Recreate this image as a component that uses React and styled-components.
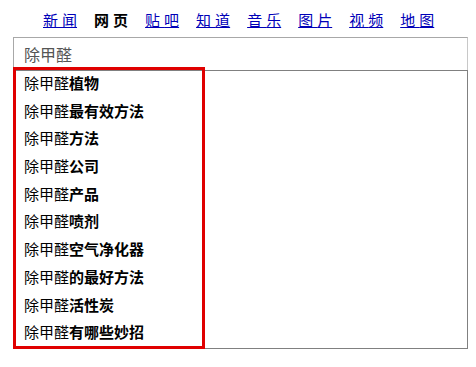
import React from "react";
import styled, { createGlobalStyle } from "styled-components";

const GlobalStyle = createGlobalStyle`
  html, body {
    margin: 0;
    padding: 0;
    background: #fff;
  }
  body {
    font-family: "Noto Sans CJK SC", "Liberation Sans", sans-serif;
  }
`;

const Page = styled.div`
  width: 476px;
  height: 367px;
  position: relative;
  box-sizing: border-box;
  padding: 10px 8px 0 13px;
`;

const Nav = styled.div`
  display: flex;
  gap: 17px;
  padding-left: 30px;
  height: 27px;
  font-size: 15px;
  line-height: 19px;
`;

const NavItem = styled.a`
  color: ${({ active }) => (active ? "#000" : "#0000b8")};
  font-weight: ${({ active }) => (active ? 700 : 400)};
  text-decoration: ${({ active }) => (active ? "none" : "underline")};
  cursor: pointer;
  span {
    letter-spacing: 4px;
  }
`;

const SearchBox = styled.div`
  width: 455px;
  box-sizing: border-box;
  height: 33px;
  border: 1px solid #a8a8a8;
  border-bottom: none;
  border-right-color: #c8c8c8;
  padding: 6px 10px;
  font-size: 16px;
  line-height: 20px;
  color: #555;
`;

const Suggest = styled.ul`
  list-style: none;
  margin: 0;
  padding: 0;
  width: 455px;
  box-sizing: border-box;
  border: 1px solid #808080;
`;

const Item = styled.li`
  height: 27.7px;
  box-sizing: border-box;
  padding: 0 0 3px 10px;
  line-height: 24.7px;
  font-size: 15px;
  color: #000;
  b {
    font-weight: 700;
  }
`;

const Highlight = styled.div`
  position: absolute;
  left: 13px;
  top: 67px;
  width: 192px;
  height: 282px;
  box-sizing: border-box;
  border: 3px solid #e00000;
  pointer-events: none;
`;

const navs = ["新闻", "网页", "贴吧", "知道", "音乐", "图片", "视频", "地图"];
const query = "除甲醛";
const suggestions = [
  "植物",
  "最有效方法",
  "方法",
  "公司",
  "产品",
  "喷剂",
  "空气净化器",
  "的最好方法",
  "活性炭",
  "有哪些妙招",
];

export default function App() {
  return (
    <>
      <GlobalStyle />
      <Page>
        <Nav>
          {navs.map((n) => (
            <NavItem key={n} active={n === "网页"}>
              <span>{n[0]}</span>
              {n.slice(1)}
            </NavItem>
          ))}
        </Nav>
        <SearchBox>{query}</SearchBox>
        <Suggest>
          {suggestions.map((s) => (
            <Item key={s}>
              {query}
              <b>{s}</b>
            </Item>
          ))}
        </Suggest>
        <Highlight />
      </Page>
    </>
  );
}
